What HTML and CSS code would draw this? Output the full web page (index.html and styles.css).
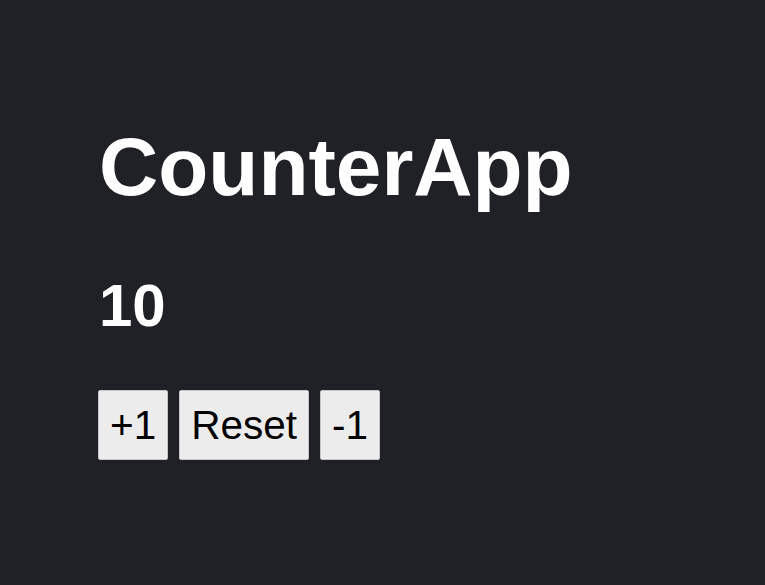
FILE: index.html
```html
<!DOCTYPE html>
<html>
<head>
<meta charset="utf-8">
<link rel="stylesheet" href="styles.css">
</head>
<body>
<main class="app">
  <h1 class="title">CounterApp</h1>
  <h2 class="count">10</h2>
  <div class="buttons">
    <button class="btn">+1</button>
    <button class="btn">Reset</button>
    <button class="btn">-1</button>
  </div>
</main>
</body>
</html>
```
FILE: styles.css
```css
html, body {
  margin: 0;
  padding: 0;
  background: #202127;
  height: 100%;
}
body {
  font-family: "Liberation Sans", Arial, sans-serif;
  color: #ffffff;
}
.app {
  display: flex;
  flex-direction: column;
  align-items: flex-start;
  padding: 121px 0 0 99px;
}
.title {
  margin: 0;
  font-size: 82px;
  line-height: 92px;
  font-weight: bold;
}
.count {
  margin: 59px 0 0 0;
  font-size: 60px;
  line-height: 67px;
  font-weight: bold;
}
.buttons {
  display: flex;
  gap: 11px;
  margin: 51px 0 0 -1px;
}
.btn {
  font-family: "Liberation Sans", Arial, sans-serif;
  font-size: 40.5px;
  line-height: 46px;
  padding: 11px 11px;
  background: #ececec;
  color: #000;
  border: 1px solid #c4c4c4;
  border-radius: 2px;
}
```
